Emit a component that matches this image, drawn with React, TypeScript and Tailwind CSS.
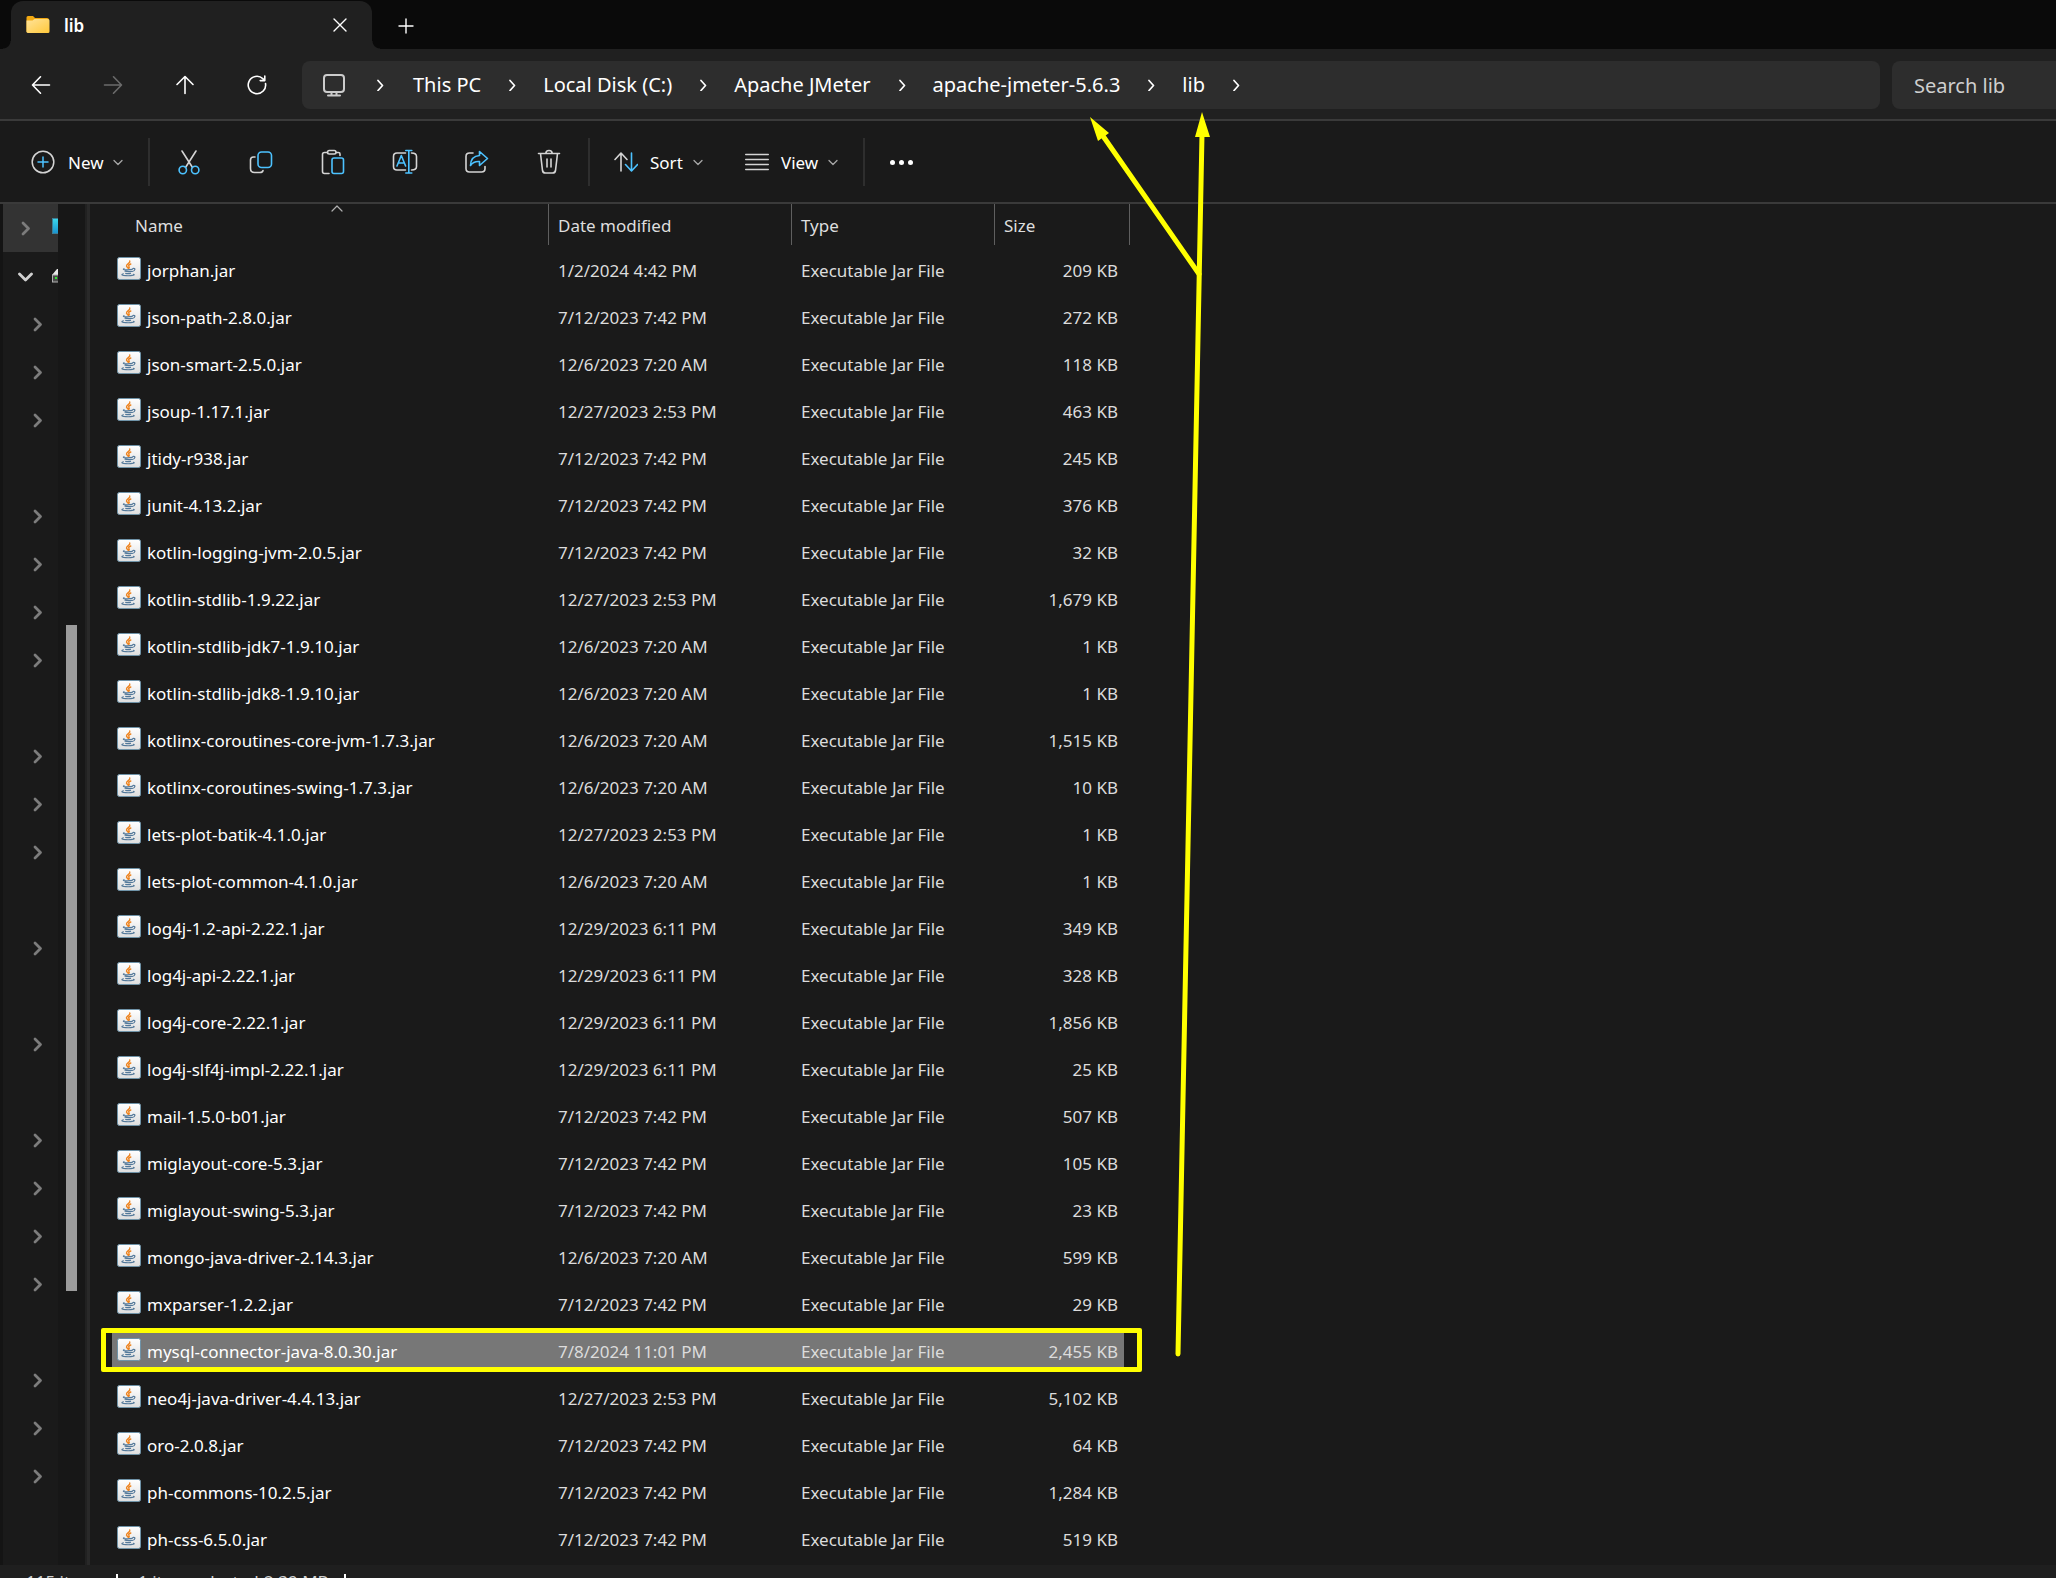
import { Fragment, type ReactNode } from "react";

type JarFile = [name: string, date: string, size: string];

const files: JarFile[] = [
  ["jorphan.jar", "1/2/2024 4:42 PM", "209 KB"],
  ["json-path-2.8.0.jar", "7/12/2023 7:42 PM", "272 KB"],
  ["json-smart-2.5.0.jar", "12/6/2023 7:20 AM", "118 KB"],
  ["jsoup-1.17.1.jar", "12/27/2023 2:53 PM", "463 KB"],
  ["jtidy-r938.jar", "7/12/2023 7:42 PM", "245 KB"],
  ["junit-4.13.2.jar", "7/12/2023 7:42 PM", "376 KB"],
  ["kotlin-logging-jvm-2.0.5.jar", "7/12/2023 7:42 PM", "32 KB"],
  ["kotlin-stdlib-1.9.22.jar", "12/27/2023 2:53 PM", "1,679 KB"],
  ["kotlin-stdlib-jdk7-1.9.10.jar", "12/6/2023 7:20 AM", "1 KB"],
  ["kotlin-stdlib-jdk8-1.9.10.jar", "12/6/2023 7:20 AM", "1 KB"],
  ["kotlinx-coroutines-core-jvm-1.7.3.jar", "12/6/2023 7:20 AM", "1,515 KB"],
  ["kotlinx-coroutines-swing-1.7.3.jar", "12/6/2023 7:20 AM", "10 KB"],
  ["lets-plot-batik-4.1.0.jar", "12/27/2023 2:53 PM", "1 KB"],
  ["lets-plot-common-4.1.0.jar", "12/6/2023 7:20 AM", "1 KB"],
  ["log4j-1.2-api-2.22.1.jar", "12/29/2023 6:11 PM", "349 KB"],
  ["log4j-api-2.22.1.jar", "12/29/2023 6:11 PM", "328 KB"],
  ["log4j-core-2.22.1.jar", "12/29/2023 6:11 PM", "1,856 KB"],
  ["log4j-slf4j-impl-2.22.1.jar", "12/29/2023 6:11 PM", "25 KB"],
  ["mail-1.5.0-b01.jar", "7/12/2023 7:42 PM", "507 KB"],
  ["miglayout-core-5.3.jar", "7/12/2023 7:42 PM", "105 KB"],
  ["miglayout-swing-5.3.jar", "7/12/2023 7:42 PM", "23 KB"],
  ["mongo-java-driver-2.14.3.jar", "12/6/2023 7:20 AM", "599 KB"],
  ["mxparser-1.2.2.jar", "7/12/2023 7:42 PM", "29 KB"],
  ["mysql-connector-java-8.0.30.jar", "7/8/2024 11:01 PM", "2,455 KB"],
  ["neo4j-java-driver-4.4.13.jar", "12/27/2023 2:53 PM", "5,102 KB"],
  ["oro-2.0.8.jar", "7/12/2023 7:42 PM", "64 KB"],
  ["ph-commons-10.2.5.jar", "7/12/2023 7:42 PM", "1,284 KB"],
  ["ph-css-6.5.0.jar", "7/12/2023 7:42 PM", "519 KB"],
];

const SELECTED = "mysql-connector-java-8.0.30.jar";

const crumbs = ["This PC", "Local Disk (C:)", "Apache JMeter", "apache-jmeter-5.6.3", "lib"];

// One entry per folder row below the two top-level entries; false leaves the row without an arrow.
const treeRows = [
  true, true, true, false, true, true, true, true, false, true, true, true, false,
  true, false, true, false, true, true, true, true, false, true, true, true,
];

const BLUE = "#4cc2ff";
const GRAY = "#d4d4d4";

function Icon({ size = 24, color = "#ffffff", width = 1.5, children }: { size?: number; color?: string; width?: number; children: ReactNode }) {
  return (
    <svg width={size} height={size} viewBox={`0 0 ${size} ${size}`} fill="none" stroke={color} strokeWidth={width} strokeLinecap="round" strokeLinejoin="round" className="shrink-0" aria-hidden="true">
      {children}
    </svg>
  );
}

function FolderIcon() {
  return (
    <svg width="24" height="20" viewBox="0 0 24 20" className="shrink-0" aria-hidden="true">
      <defs>
        <linearGradient id="folder" x1="0" y1="0" x2="1" y2="1">
          <stop offset="0" stopColor="#ffe39a" />
          <stop offset="1" stopColor="#ffc83a" />
        </linearGradient>
      </defs>
      <path d="M0.500 2.500q0-1.500 1.500-1.500h5l2 2h12q2 0 2 2v12H.5z" fill="#f2a912" />
      <path d="M.5 5.500h6l2-1.500h13.500q1.500 0 1.500 1.500v11q0 1.500-1.500 1.500H2q-1.500 0-1.500-1.500z" fill="url(#folder)" />
    </svg>
  );
}

function JarIcon() {
  return (
    <svg width="24" height="23" viewBox="0 0 24 23" className="shrink-0" aria-hidden="true">
      <defs>
        <linearGradient id="jar" x1="0" y1="0" x2="0" y2="1">
          <stop offset="0" stopColor="#ffffff" />
          <stop offset="1" stopColor="#dedede" />
        </linearGradient>
      </defs>
      <rect x="0.500" y="0.500" width="23" height="22" rx="2" fill="url(#jar)" stroke="#6f93a8" />
      <path d="M12.800 4c1 2-3.800 3-3.300 5 .2 1 1.300 1.500 1.800 2.300M13.800 7c-2 .8-2.600 1.600-1.800 2.600.5.700.4 1.200-.2 1.900" fill="none" stroke="#ee8420" strokeWidth="1.400" strokeLinecap="round" />
      <g fill="none" stroke="#54799a" strokeWidth="1.200" strokeLinecap="round">
        <path d="M7 11.700q-1.400.6.300.9 4 .5 8-.2M15.800 11.500c3-.6 2.800 2.200-.6 3M8 14.200q3.200.9 6.400.1M8.700 16.300q2.400.7 4.800.1M6.300 16.800q-3 1 .2 1.600 5.500.8 9.800-.2 1.500-.5.300-.9" />
      </g>
    </svg>
  );
}

function Caret() {
  return (
    <Icon size={10} color="#a8a8a8" width={1.3}>
      <path d="M1 3.500l4 4 4-4" />
    </Icon>
  );
}

function Crumb() {
  return (
    <Icon size={12} width={1.7}>
      <path d="M4 1.500L8.500 6.500 4 11.500" />
    </Icon>
  );
}

function TabStrip() {
  return (
    <div className="flex h-[49px] shrink-0 bg-[#0a0a0a] pl-[11px]">
      <div className="relative mt-px flex w-[361px] items-center rounded-t-xl bg-[#202020] pr-4 pl-[15px]">
        <span className="absolute bottom-0 -left-2 size-2 bg-[radial-gradient(circle_at_0_0,#0a0a0a_7px,#202020_8px)]" />
        <span className="absolute -right-2 bottom-0 size-2 bg-[radial-gradient(circle_at_100%_0,#0a0a0a_7px,#202020_8px)]" />
        <FolderIcon />
        <span className="ml-[14px] flex-1 pt-px text-[17px] font-semibold">lib</span>
        <button aria-label="Close tab" className="flex size-8 items-center justify-center">
          <Icon size={14} width={1.4}><path d="M1 1l12 12M13 1L1 13" /></Icon>
        </button>
      </div>
      <button aria-label="New tab" className="ml-[18px] flex w-8 items-center justify-center pt-0.5">
        <Icon size={16} width={1.4}><path d="M8 1v14M1 8h14" /></Icon>
      </button>
    </div>
  );
}

function NavButton({ label, color, children }: { label: string; color?: string; children: ReactNode }) {
  return (
    <button aria-label={label} className="flex h-12 w-[72px] shrink-0 items-center justify-center">
      <Icon size={20} color={color} width={1.6}>{children}</Icon>
    </button>
  );
}

function NavBar() {
  return (
    <div className="flex h-[72px] shrink-0 items-center border-b-2 border-[#3a3a3a] bg-[#202020] pt-0.5 pl-[5px]">
      <NavButton label="Back"><path d="M18.500 10H2M9.500 1.800L1.500 10l8 8.200" /></NavButton>
      <NavButton label="Forward" color="#6b6b6b"><path d="M1.500 10H18M10.500 1.800l8 8.200-8 8.200" /></NavButton>
      <NavButton label="Up"><path d="M10 18.500V2M2 9.500l8-8 8 8" /></NavButton>
      <NavButton label="Refresh"><path d="M18.500 8.500A8.700 8.700 0 1 1 15.800 3.600l1.700 1.700M17.800 1v4.600h-4.600" /></NavButton>
      <nav aria-label="Address" className="ml-[9px] flex h-12 flex-1 items-center rounded-lg bg-[#2d2d2d] pl-5 text-[20px]">
        <Icon size={24} color="#cccccc" width={2}>
          <rect x="2" y="2" width="20" height="17" rx="3" />
          <path d="M6 22.500h12M9.500 19.500v2.500M14.500 19.500v2.500" />
        </Icon>
        <span className="flex w-[67px] justify-center"><Crumb /></span>
        {crumbs.map((crumb) => (
          <Fragment key={crumb}>
            <a href="#" className="whitespace-nowrap">{crumb}</a>
            <span className="flex w-[62px] shrink-0 justify-center"><Crumb /></span>
          </Fragment>
        ))}
      </nav>
      <input aria-label="Search lib" placeholder="Search lib" className="ml-3 h-12 w-[164px] rounded-l-lg bg-[#2d2d2d] pl-[22px] text-[20px] outline-none placeholder:text-[#cfcfcf]" />
    </div>
  );
}

function ToolButton({ label, children }: { label: string; children: ReactNode }) {
  return (
    <button aria-label={label} className="flex h-12 w-[72px] items-center justify-center">
      <Icon size={26} color={GRAY} width={1.6}>{children}</Icon>
    </button>
  );
}

function Divider() {
  return <div className="h-12 w-[2px] bg-[#2e2e2e]" />;
}

function Toolbar() {
  return (
    <div className="flex h-[83px] shrink-0 items-center border-b-2 border-[#3a3a3a] bg-[#1a1a1a] text-[17px]">
      <button className="flex w-[148px] items-center pl-[31px]">
        <Icon color={GRAY}>
          <circle cx="12" cy="12" r="10.800" />
          <path d="M12 7v10M7 12h10" stroke={BLUE} />
        </Icon>
        <span className="ml-[13px] w-[45px] pt-0.5 text-left">New</span>
        <Caret />
      </button>
      <Divider />
      <div className="flex px-[3px]">
        <ToolButton label="Cut">
          <path d="M6 2l10.500 16.500M20 2L9.500 18.500" />
          <g stroke={BLUE}><circle cx="6.800" cy="21" r="3.700" /><circle cx="19.200" cy="21" r="3.700" /></g>
        </ToolButton>
        <ToolButton label="Copy">
          <path d="M7 8H5.500Q2.500 8 2.500 11v8.500q0 4 4 4H12q2.500 0 3-2" />
          <rect x="10" y="3" width="13.500" height="15.500" rx="3.500" stroke={BLUE} />
        </ToolButton>
        <ToolButton label="Paste">
          <path d="M7.500 3.500H4.500q-2 0-2 2v17q0 2 2 2H9M16.500 3.500h2q1.500 0 1.500 1.500v1.500" />
          <rect x="7.500" y="1.500" width="8.500" height="3.500" rx="1.700" />
          <rect x="12" y="9" width="11.500" height="15.500" rx="2" stroke={BLUE} />
        </ToolButton>
        <ToolButton label="Rename">
          <path d="M13.500 4H5Q1.500 4 1.500 7.500v10Q1.500 21 5 21h8.500M19.500 4q5 0 5 3.500v10q0 3.500-5 3.500" />
          <path d="M5 17l4.300-10.500L13.600 17M6.300 14h6M16.800 1.500v22.500M13.800 1.500h6M13.800 24h6" stroke={BLUE} />
        </ToolButton>
        <ToolButton label="Share">
          <path d="M9 4H5.500Q2 4 2 7.500v12Q2 23 5.500 23h12q3.500 0 3.500-3.500v-2" />
          <path d="M15.500 2.500l8 7-8 7v-4q-6-.5-9 4 .3-9.500 9-10z" stroke={BLUE} />
        </ToolButton>
        <ToolButton label="Delete">
          <path d="M2.500 4.500h21M4.500 4.500l2 17q.4 2.500 3 2.500h7q2.600 0 3-2.500l2-17M9.800 4.500q0-3 3.200-3t3.200 3M11 10v8M15 10v8" />
        </ToolButton>
      </div>
      <Divider />
      <button className="flex w-[136px] items-center pl-[24px]">
        <Icon color={GRAY} width={1.6}>
          <path d="M7 21V3.500M1 9.500L7 3l6 6.500" />
          <path d="M17.500 3v17.500M11.500 14.500l6 6.500 6-6.500" stroke={BLUE} />
        </Icon>
        <span className="ml-3 w-[43px] pt-0.5 text-left">Sort</span>
        <Caret />
      </button>
      <button className="flex w-[137px] items-center pl-[19px]">
        <Icon color={GRAY} width={1.4}>
          <path d="M.7 4.500h22.600M.7 9.500h22.600M.7 14.500h22.600M.7 19.500h22.600" />
        </Icon>
        <span className="ml-3 w-[47px] pt-0.5 text-left">View</span>
        <Caret />
      </button>
      <Divider />
      <button aria-label="See more" className="flex w-[72px] items-center justify-center gap-1 pt-0.5">
        <span className="size-[5px] rounded-full bg-white" />
        <span className="size-[5px] rounded-full bg-white" />
        <span className="size-[5px] rounded-full bg-white" />
      </button>
    </div>
  );
}

function TreeArrow({ open = false }: { open?: boolean }) {
  return (
    <Icon size={16} color={open ? "#d0d0d0" : "#7c7c7c"} width={2.8}>
      {open ? <path d="M2.500 6l6 6 6-6" /> : <path d="M6 3l5.500 5.500L6 14" />}
    </Icon>
  );
}

function Sidebar() {
  return (
    <aside className="flex shrink-0 bg-[#171717]">
      <div className="w-[55px] overflow-hidden bg-[#1a1a1a]">
        <button aria-label="Expand device" className="flex h-12 w-full items-center gap-4 bg-[#333333] pl-[14px]">
          <TreeArrow />
          <span className="-mt-1 ml-[3px] h-4 w-6 shrink-0 border border-[#3d7f96] bg-linear-to-b from-[#3ad6ea] to-[#1c94cf]" />
        </button>
        <button aria-label="Collapse drive" className="flex h-12 w-full items-center gap-4 pl-[14px]">
          <TreeArrow open />
          <svg width="24" height="14" viewBox="0 0 24 14" className="ml-[3px] shrink-0" aria-hidden="true">
            <path d="M0 6L5 0h14l5 6z" fill="#e8e8e8" />
            <rect x="0.500" y="6" width="23" height="7" fill="#4a4a4a" stroke="#b0b0b0" />
            <rect x="3" y="8" width="2" height="2" fill="#2ee62e" />
          </svg>
        </button>
        {treeRows.map((hasArrow, i) => (
          <div key={i} className="flex h-12 items-center pl-[26px]">
            {hasArrow && (
              <button aria-label="Expand folder"><TreeArrow /></button>
            )}
          </div>
        ))}
      </div>
      <div className="w-[27px] pt-[421px] pl-2">
        <div className="h-[666px] w-[11px] bg-[#9b9b9b]" />
      </div>
    </aside>
  );
}

function FileTable() {
  const head = "relative h-[41px] border-r border-[#5f5f5f] p-0 pt-0.5 text-left font-normal text-[#dedede]";
  return (
    <table className="w-[1018px] table-fixed border-separate border-spacing-0 self-start text-[17px] leading-6">
      <colgroup>
        <col className="w-[437px]" />
        <col className="w-[243px]" />
        <col className="w-[203px]" />
        <col className="w-[129px]" />
        <col className="w-[6px]" />
      </colgroup>
      <thead>
        <tr>
          <th className={head}>
            <span className="absolute top-0 left-[218px]">
              <Icon size={14} color="#b0b0b0" width={1.2}><path d="M2 7l5-5 5 5" /></Icon>
            </span>
            <span className="pl-[23px]">Name</span>
          </th>
          <th className={head}><span className="pl-[9px]">Date modified</span></th>
          <th className={head}><span className="pl-[9px]">Type</span></th>
          <th className={head} colSpan={2}><span className="pl-[9px]">Size</span></th>
        </tr>
        <tr aria-hidden="true"><td colSpan={5} className="h-[2px] p-0" /></tr>
      </thead>
      <tbody>
        {files.map(([name, date, size]) => {
          const selected = name === SELECTED;
          const cell = selected
            ? "h-[47px] border-y-[3px] border-transparent bg-[#777777] bg-clip-padding p-0 text-[#dcdcdc]"
            : "h-[47px] p-0 text-[#dcdcdc]";
          return (
            <tr key={name} className="relative">
              <td className={cell}>
                <div className="flex items-center gap-[6px] pl-[5px] whitespace-nowrap text-white">
                  <span className="-mt-1"><JarIcon /></span>
                  {name}
                </div>
                {selected && <div className="absolute top-0 -left-[11px] h-11 w-[1041px] rounded-xs border-[5px] border-[#ffff00]" />}
              </td>
              <td className={cell}><span className="pl-[9px]">{date}</span></td>
              <td className={cell}><span className="pl-[9px]">Executable Jar File</span></td>
              <td className={cell}><div className="pr-[6px] text-right">{size}</div></td>
              <td className="p-0" />
            </tr>
          );
        })}
      </tbody>
    </table>
  );
}

function Annotations() {
  return (
    <svg width="1240" height="1400" viewBox="0 0 1240 1400" className="pointer-events-none absolute top-0 left-0" aria-hidden="true">
      <g stroke="#ffff00" strokeWidth="5" strokeLinecap="round">
        <path d="M1178 1354L1202 134" />
        <path d="M1199 274L1103 136" />
      </g>
      <path d="M1202 112l8 25h-15zM1090 117l19 16-11 8z" fill="#ffff00" />
    </svg>
  );
}

export default function App() {
  return (
    <div className="relative flex h-screen flex-col overflow-hidden bg-[#1a1a1a] font-['Noto_Sans',sans-serif] text-white">
      <TabStrip />
      <NavBar />
      <Toolbar />
      <main className="flex h-[1361px] shrink-0 border-l-[3px] border-[#141414]">
        <Sidebar />
        <div className="w-[5px] shrink-0 border-l-2 border-[#212121] bg-[#292929]" />
        <div className="flex-1 pl-[22px]"><FileTable /></div>
      </main>
      <footer className="flex h-10 shrink-0 items-start bg-[#1f1f1f] pl-[26px] text-[17px] text-[#cfcfcf]">
        <span className="w-[90px] pt-1">115 items</span>
        <span className="mt-[9px] h-5 w-[2px] bg-white" />
        <span className="ml-[20px] w-[126px] pt-1 whitespace-nowrap">1 item selected</span>
        <span className="w-[80px] pt-1 whitespace-nowrap">2.39 MB</span>
        <span className="mt-[9px] h-5 w-[2px] bg-white" />
      </footer>
      <Annotations />
    </div>
  );
}
